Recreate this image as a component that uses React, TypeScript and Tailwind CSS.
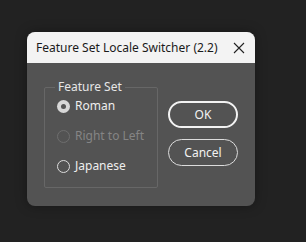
export default function App() {
  return (
    <div className="w-[306px] h-[242px] bg-[#222222] pt-[32px] pl-[27px]" style={{ fontFamily: '"Noto Sans", "Open Sans", sans-serif' }}>
      <div className="w-[228px] h-[174px] rounded-[8px] overflow-hidden bg-[#535353] shadow-[0_0_12px_rgba(0,0,0,0.35)] flex flex-col">
        <div className="h-[31px] bg-[#f3f3f3] flex items-center justify-between pl-[9px] pr-[8px]">
          <span className="text-[12px] text-[#1a1a1a] leading-none">Feature Set Locale Switcher (2.2)</span>
          <svg width="14" height="14" viewBox="0 0 14 14" className="mr-[1px]">
            <path d="M2 2 L12 12 M12 2 L2 12" stroke="#222" strokeWidth="1.1" />
          </svg>
        </div>
        <div className="flex pl-[17px] pt-[24px]">
          <div className="relative w-[114px] h-[101px] border border-[#676767] rounded-[2px] flex flex-col pl-[12px] pt-[10px] gap-[14px]">
            <span className="absolute -top-[9px] left-[10px] px-[3px] bg-[#535353] text-[12px] leading-[16px] text-[#e6e6e6]">Feature Set</span>
            <div className="flex items-center gap-[5px] h-[16px]">
              <span className="w-[13px] h-[13px] rounded-full bg-[#d8d8d8] flex items-center justify-center">
                <span className="w-[5px] h-[5px] rounded-full bg-[#555555]" />
              </span>
              <span className="text-[12px] text-[#eeeeee]">Roman</span>
            </div>
            <div className="flex items-center gap-[5px] h-[16px]">
              <span className="w-[13px] h-[13px] rounded-full border border-[#6e6e6e]" />
              <span className="text-[12px] text-[#858585]">Right to Left</span>
            </div>
            <div className="flex items-center gap-[5px] h-[16px]">
              <span className="w-[13px] h-[13px] rounded-full border border-[#dcdcdc]" />
              <span className="text-[12px] text-[#eeeeee]">Japanese</span>
            </div>
          </div>
          <div className="flex flex-col ml-[10px] mt-[14px] gap-[11px]">
            <button className="w-[70px] h-[27px] rounded-full border-2 border-[#f2f2f2] text-[12px] text-[#f2f2f2] flex items-center justify-center">OK</button>
            <button className="w-[70px] h-[27px] rounded-full border border-[#dcdcdc] text-[12px] text-[#f2f2f2] flex items-center justify-center">Cancel</button>
          </div>
        </div>
      </div>
    </div>
  );
}
